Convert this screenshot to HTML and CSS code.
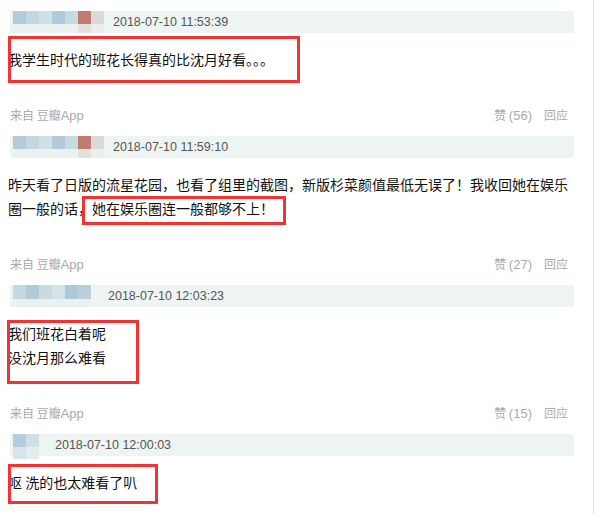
FILE: index.html
```html
<!DOCTYPE html>
<html lang="zh-CN">
<head>
    <meta charset="UTF-8">
    <title>评论</title>
    <link rel="stylesheet" href="styles.css">
</head>
<body>
    <div class="page">
        <div class="comment">
            <div class="comment-head">
                <div class="avatar avatar-a">
                    <span class="c1"></span><span class="c2"></span><span class="c3"></span><span class="c4"></span><span class="c5"></span><span class="c6"></span><span class="c7"></span>
                    <span class="l1"></span><span class="l1"></span><span class="l1"></span><span class="l1"></span><span class="l1"></span><span class="l2"></span><span class="l3"></span>
                </div>
                <span class="time">2018-07-10 11:53:39</span>
            </div>
            <div class="comment-body">
                <p>我学生时代的班花长得真的比沈月好看。。。</p>
                <div class="mark mark-1"></div>
            </div>
            <div class="comment-meta">
                <span>来自 豆瓣<i>App</i></span>
                <span class="actions"><span>赞 <em>(56)</em></span><span>回应</span></span>
            </div>
        </div>

        <div class="comment">
            <div class="comment-head">
                <div class="avatar avatar-a">
                    <span class="c1"></span><span class="c2"></span><span class="c3"></span><span class="c4"></span><span class="c5"></span><span class="c6"></span><span class="c7"></span>
                    <span class="l1"></span><span class="l1"></span><span class="l1"></span><span class="l1"></span><span class="l1"></span><span class="l2"></span><span class="l3"></span>
                </div>
                <span class="time">2018-07-10 11:59:10</span>
            </div>
            <div class="comment-body">
                <p>昨天看了日版的流星花园，也看了组里的截图，新版杉菜颜值最低无误了！我收回她在娱乐圈一般的话，她在娱乐圈连一般都够不上！</p>
                <div class="mark mark-2"></div>
            </div>
            <div class="comment-meta">
                <span>来自 豆瓣<i>App</i></span>
                <span class="actions"><span>赞 <em>(27)</em></span><span>回应</span></span>
            </div>
        </div>

        <div class="comment">
            <div class="comment-head">
                <div class="avatar avatar-b">
                    <span class="b1"></span><span class="b2"></span><span class="b3"></span><span class="b4"></span><span class="b5"></span><span class="b6"></span>
                    <span class="l1"></span><span class="l1"></span><span class="l1"></span><span class="l1"></span><span class="l1"></span><span class="l1"></span>
                </div>
                <span class="time">2018-07-10 12:03:23</span>
            </div>
            <div class="comment-body">
                <p>我们班花白着呢<br>没沈月那么难看</p>
                <div class="mark mark-3"></div>
            </div>
            <div class="comment-meta">
                <span>来自 豆瓣<i>App</i></span>
                <span class="actions"><span>赞 <em>(15)</em></span><span>回应</span></span>
            </div>
        </div>

        <div class="comment">
            <div class="comment-head">
                <div class="avatar avatar-c">
                    <span class="d1"></span><span class="d2"></span>
                    <span class="d3"></span><span class="d4"></span>
                </div>
                <span class="time">2018-07-10 12:00:03</span>
            </div>
            <div class="comment-body">
                <p>呕 洗的也太难看了叭</p>
                <div class="mark mark-4"></div>
            </div>
        </div>
    </div>
</body>
</html>
```

FILE: styles.css
```css
* {
    margin: 0;
    padding: 0;
    box-sizing: border-box;
}

body {
    font-family: "Noto Sans CJK SC", "Liberation Sans", sans-serif;
    background: #fff;
    color: #111;
}

.page {
    width: 594px;
    min-height: 100vh;
    padding-top: 11px;
    border-right: 1px solid #e2e2e2;
}

.comment-head {
    display: flex;
    align-items: center;
    height: 22px;
    margin: 0 19px 0 10px;
    padding-left: 3px;
    background: #eef4f2;
}

.avatar {
    display: grid;
    align-self: flex-start;
    grid-auto-rows: 13px 9px;
}

.avatar span {
    display: block;
}

.avatar-a {
    grid-template-columns: repeat(7, 13px);
    margin-right: 9px;
}

.avatar-b {
    grid-template-columns: repeat(6, 13px);
    grid-auto-rows: 14px 8px;
    margin-right: 17px;
}

.avatar-c {
    grid-template-columns: repeat(2, 13px);
    grid-auto-rows: 13px 12px;
    margin-right: 16px;
}

.c1 { background: #b4ccda; }
.c2 { background: #c5d8e1; }
.c3 { background: #d0e0e5; }
.c4 { background: #b2cbd9; }
.c5 { background: #c6dbe2; }
.c6 { background: #c27b70; }
.c7 { background: #dcdad5; }
.l1 { background: #eaf1f2; }
.l2 { background: #e3dfdd; }
.l3 { background: #eceeec; }

.b1 { background: #c5d8e1; }
.b2 { background: #b0cad8; }
.b3 { background: #c9dbe2; }
.b4 { background: #d5e3e7; }
.b5 { background: #aec8d8; }
.b6 { background: #b9d0dc; }

.d1 { background: #b5cddb; }
.d2 { background: #cfdfe5; }
.d3 { background: #d8e4e9; }
.d4 { background: #e3ecee; }

.time {
    font-family: "Liberation Sans", Arial, sans-serif;
    font-size: 12.5px;
    color: #555;
}

.comment-body {
    position: relative;
    margin-top: 14px;
    padding: 0 24px 0 8px;
    font-size: 14px;
    line-height: 24px;
    color: #111;
}

.comment-meta {
    display: flex;
    justify-content: space-between;
    margin: 36px 0 12px;
    padding: 0 25px 0 10px;
    font-size: 12px;
    line-height: 16px;
    color: #aaa;
}

.comment-meta i,
.actions em {
    font-style: normal;
    font-family: "Liberation Sans", Arial, sans-serif;
    font-size: 13px;
}

.actions {
    display: flex;
    gap: 12px;
}

/* 红色标注框 */
.mark {
    position: absolute;
    border: 3px solid #f03434;
}

.mark-1 { top: -11px; left: 8px; width: 292px; height: 47px; }
.mark-2 { top: 24px; left: 82px; width: 204px; height: 29px; }
.mark-3 { top: -1px; left: 7px; width: 132px; height: 64px; }
.mark-4 { top: -6px; left: 8px; width: 150px; height: 40px; }
```
